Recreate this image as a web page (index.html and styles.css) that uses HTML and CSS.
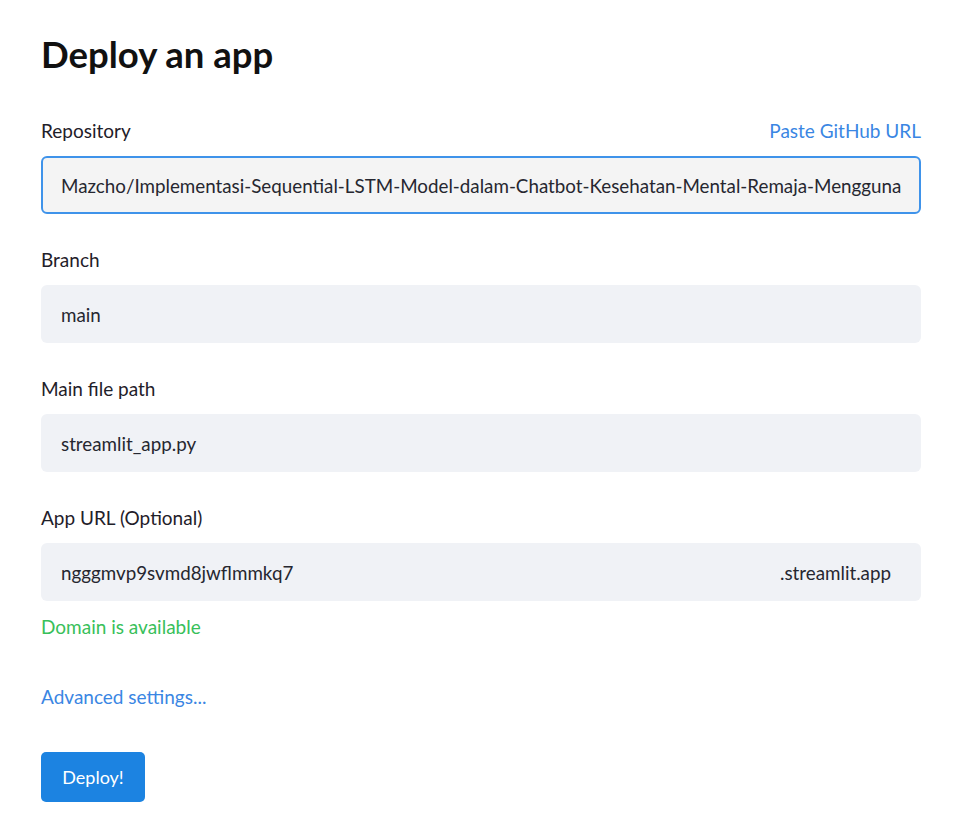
FILE: index.html
```html
<!DOCTYPE html>
<html lang="en">
<head>
<meta charset="utf-8">
<title>Deploy an app</title>
<link rel="stylesheet" href="styles.css">
</head>
<body>
<main class="page">
  <h1 class="title">Deploy an app</h1>

  <section class="field">
    <div class="label-row">
      <span class="label">Repository</span>
      <a class="link" href="#">Paste GitHub URL</a>
    </div>
    <div class="input input--focused">Mazcho/Implementasi-Sequential-LSTM-Model-dalam-Chatbot-Kesehatan-Mental-Remaja-Mengguna</div>
  </section>

  <section class="field">
    <div class="label-row"><span class="label">Branch</span></div>
    <div class="input">main</div>
  </section>

  <section class="field">
    <div class="label-row"><span class="label">Main file path</span></div>
    <div class="input">streamlit_app.py</div>
  </section>

  <section class="field">
    <div class="label-row"><span class="label">App URL (Optional)</span></div>
    <div class="input input--url"><span>ngggmvp9svmd8jwflmmkq7</span><span class="suffix">.streamlit.app</span></div>
  </section>

  <p class="status">Domain is available</p>

  <a class="link advanced" href="#">Advanced settings...</a>

  <div class="actions">
    <button class="btn">Deploy!</button>
  </div>
</main>
</body>
</html>
```

FILE: styles.css
```css
* { box-sizing: border-box; }

html, body {
  margin: 0;
  background: #ffffff;
}

body {
  font-family: Lato, "Noto Sans", sans-serif;
  color: #31333f;
}

.page {
  width: 955px;
  padding: 32px 34px 0 41px;
  display: flex;
  flex-direction: column;
}

.title {
  margin: 0 0 42px;
  font-size: 36.5px;
  line-height: 44px;
  font-weight: 700;
  color: #111111;
}

.field {
  display: flex;
  flex-direction: column;
  margin-bottom: 33px;
}

.field:nth-of-type(4) { margin-bottom: 0; }

.label-row {
  display: flex;
  justify-content: space-between;
  align-items: center;
  height: 26px;
  margin-bottom: 12px;
}

.label {
  font-size: 19px;
  line-height: 26px;
  color: #1f2029;
}

.link {
  font-size: 19px;
  line-height: 26px;
  color: #3a86e3;
  text-decoration: none;
}

.input {
  height: 58px;
  display: flex;
  align-items: center;
  padding: 0 20px;
  border-radius: 6px;
  background: #f0f2f6;
  font-size: 18.8px;
  color: #262730;
  white-space: nowrap;
  overflow: hidden;
}

.input--focused {
  background: #f4f4f4;
  border: 2px solid #3f93ea;
  padding: 0 18px;
}

.input--url {
  justify-content: space-between;
  padding-right: 30px;
}

.status {
  margin: 13px 0 0;
  font-size: 19px;
  line-height: 26px;
  color: #38c05a;
}

.advanced {
  margin-top: 44px;
  align-self: flex-start;
}

.actions {
  margin-top: 42px;
}

.btn {
  height: 50px;
  width: 104px;
  border: none;
  border-radius: 5px;
  background: #1c83e1;
  color: #ffffff;
  font-family: inherit;
  font-size: 18px;
  padding: 0;
}
```
